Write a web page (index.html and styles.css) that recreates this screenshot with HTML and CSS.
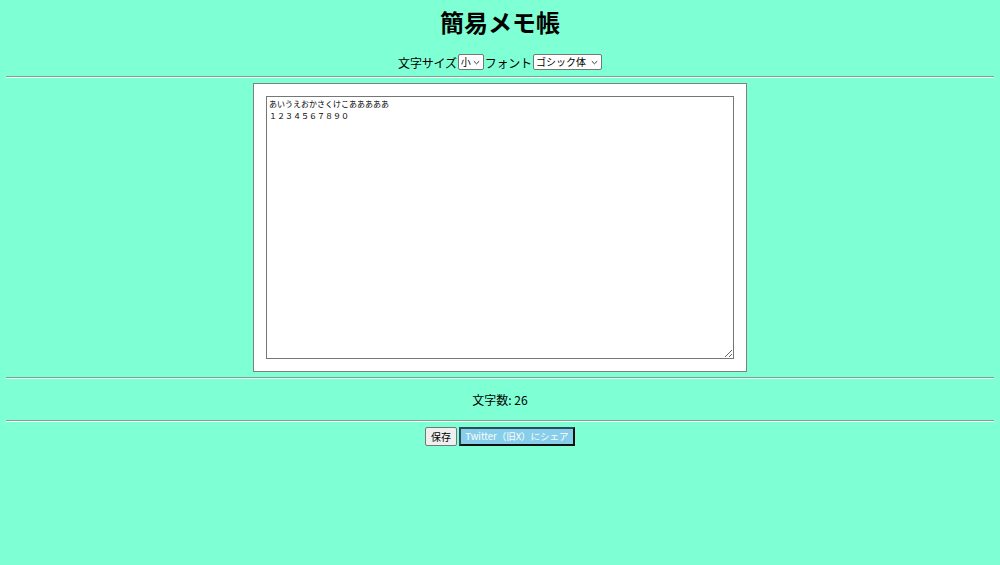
FILE: index.html
```html
<!DOCTYPE html>
<html lang="ja">
<head>
<meta charset="utf-8">
<title>簡易メモ帳</title>
<link rel="stylesheet" href="styles.css">
</head>
<body>
<h1 class="title">簡易メモ帳</h1>
<div class="controls">文字サイズ<select class="sel sel-size"><option>小</option><option>中</option><option>大</option></select>フォント<select class="sel sel-font"><option>ゴシック体</option><option>明朝体</option></select></div>
<hr class="rule">
<div class="editor">
<textarea class="memo">あいうえおかさくけこあああああ
１２３４５６７８９０</textarea>
</div>
<hr class="rule">
<div class="count">文字数: 26</div>
<hr class="rule">
<div class="actions">
<button class="btn btn-save">保存</button>
<button class="btn btn-share">Twitter（旧X）にシェア</button>
</div>
</body>
</html>
```

FILE: styles.css
```css
html, body {
  background: #7fffd4;
}
body {
  margin: 6px;
  font-family: "Noto Sans CJK JP", "Noto Sans", sans-serif;
  font-size: 12px;
  color: #000;
  text-align: center;
}
.title {
  margin: 0;
  font-size: 24px;
  line-height: 32px;
  font-weight: bold;
}
.controls {
  margin-top: 15px;
  height: 18px;
  display: flex;
  justify-content: center;
  align-items: center;
  gap: 1px;
  letter-spacing: -0.2px;
}
.sel {
  -webkit-appearance: none;
  appearance: none;
  font-family: "Noto Sans CJK JP", sans-serif;
  font-size: 10px;
  letter-spacing: 0;
  height: 16px;
  line-height: 14px;
  padding: 0 0 0 2px;
  border: 1px solid #767676;
  border-radius: 2px;
  background-color: #fff;
  background-image: url("data:image/svg+xml,%3Csvg xmlns='http://www.w3.org/2000/svg' width='7' height='5' viewBox='0 0 7 5'%3E%3Cpath d='M0.8 1.2 L3.5 3.8 L6.2 1.2' fill='none' stroke='%23333' stroke-width='1'/%3E%3C/svg%3E");
  background-repeat: no-repeat;
  background-position: right 3px center;
  color: #000;
  text-align: left;
}
.sel-size { width: 26px; }
.sel-font { width: 69px; }
.rule {
  margin: 5px 0 5px;
  border: 0;
  border-top: 1px solid #8a9a94;
  border-bottom: 1px solid #e6fff6;
  height: 0;
}
.editor {
  width: 494px;
  box-sizing: border-box;
  margin: 0 auto;
  padding: 12px;
  background: #fff;
  border: 1px solid #808080;
}
.memo {
  display: block;
  box-sizing: border-box;
  width: 468px;
  height: 263px;
  margin: 0;
  padding: 1px 2px;
  border: 1px solid #767676;
  font-family: "Noto Sans CJK JP", sans-serif;
  font-size: 8px;
  line-height: 12px;
  color: #000;
  resize: both;
}
.count {
  height: 31px;
  line-height: 32px;
}
.actions {
  display: flex;
  justify-content: center;
  gap: 2px;
}
.btn {
  font-family: "Noto Sans CJK JP", sans-serif;
  font-size: 10px;
  height: 19px;
  line-height: 15px;
  box-sizing: border-box;
  white-space: nowrap;
}
.btn-save {
  width: 32px;
  padding: 1px 4px;
  background: #efefef;
  border: 1px solid #767676;
  border-radius: 2px;
  color: #000;
}
.btn-share {
  width: 116px;
  padding: 0;
  font-size: 9.5px;
  background: #87ceeb;
  color: #fff;
  border: 2px solid;
  border-color: #2f4b5a #111 #111 #2f4b5a;
}
```
